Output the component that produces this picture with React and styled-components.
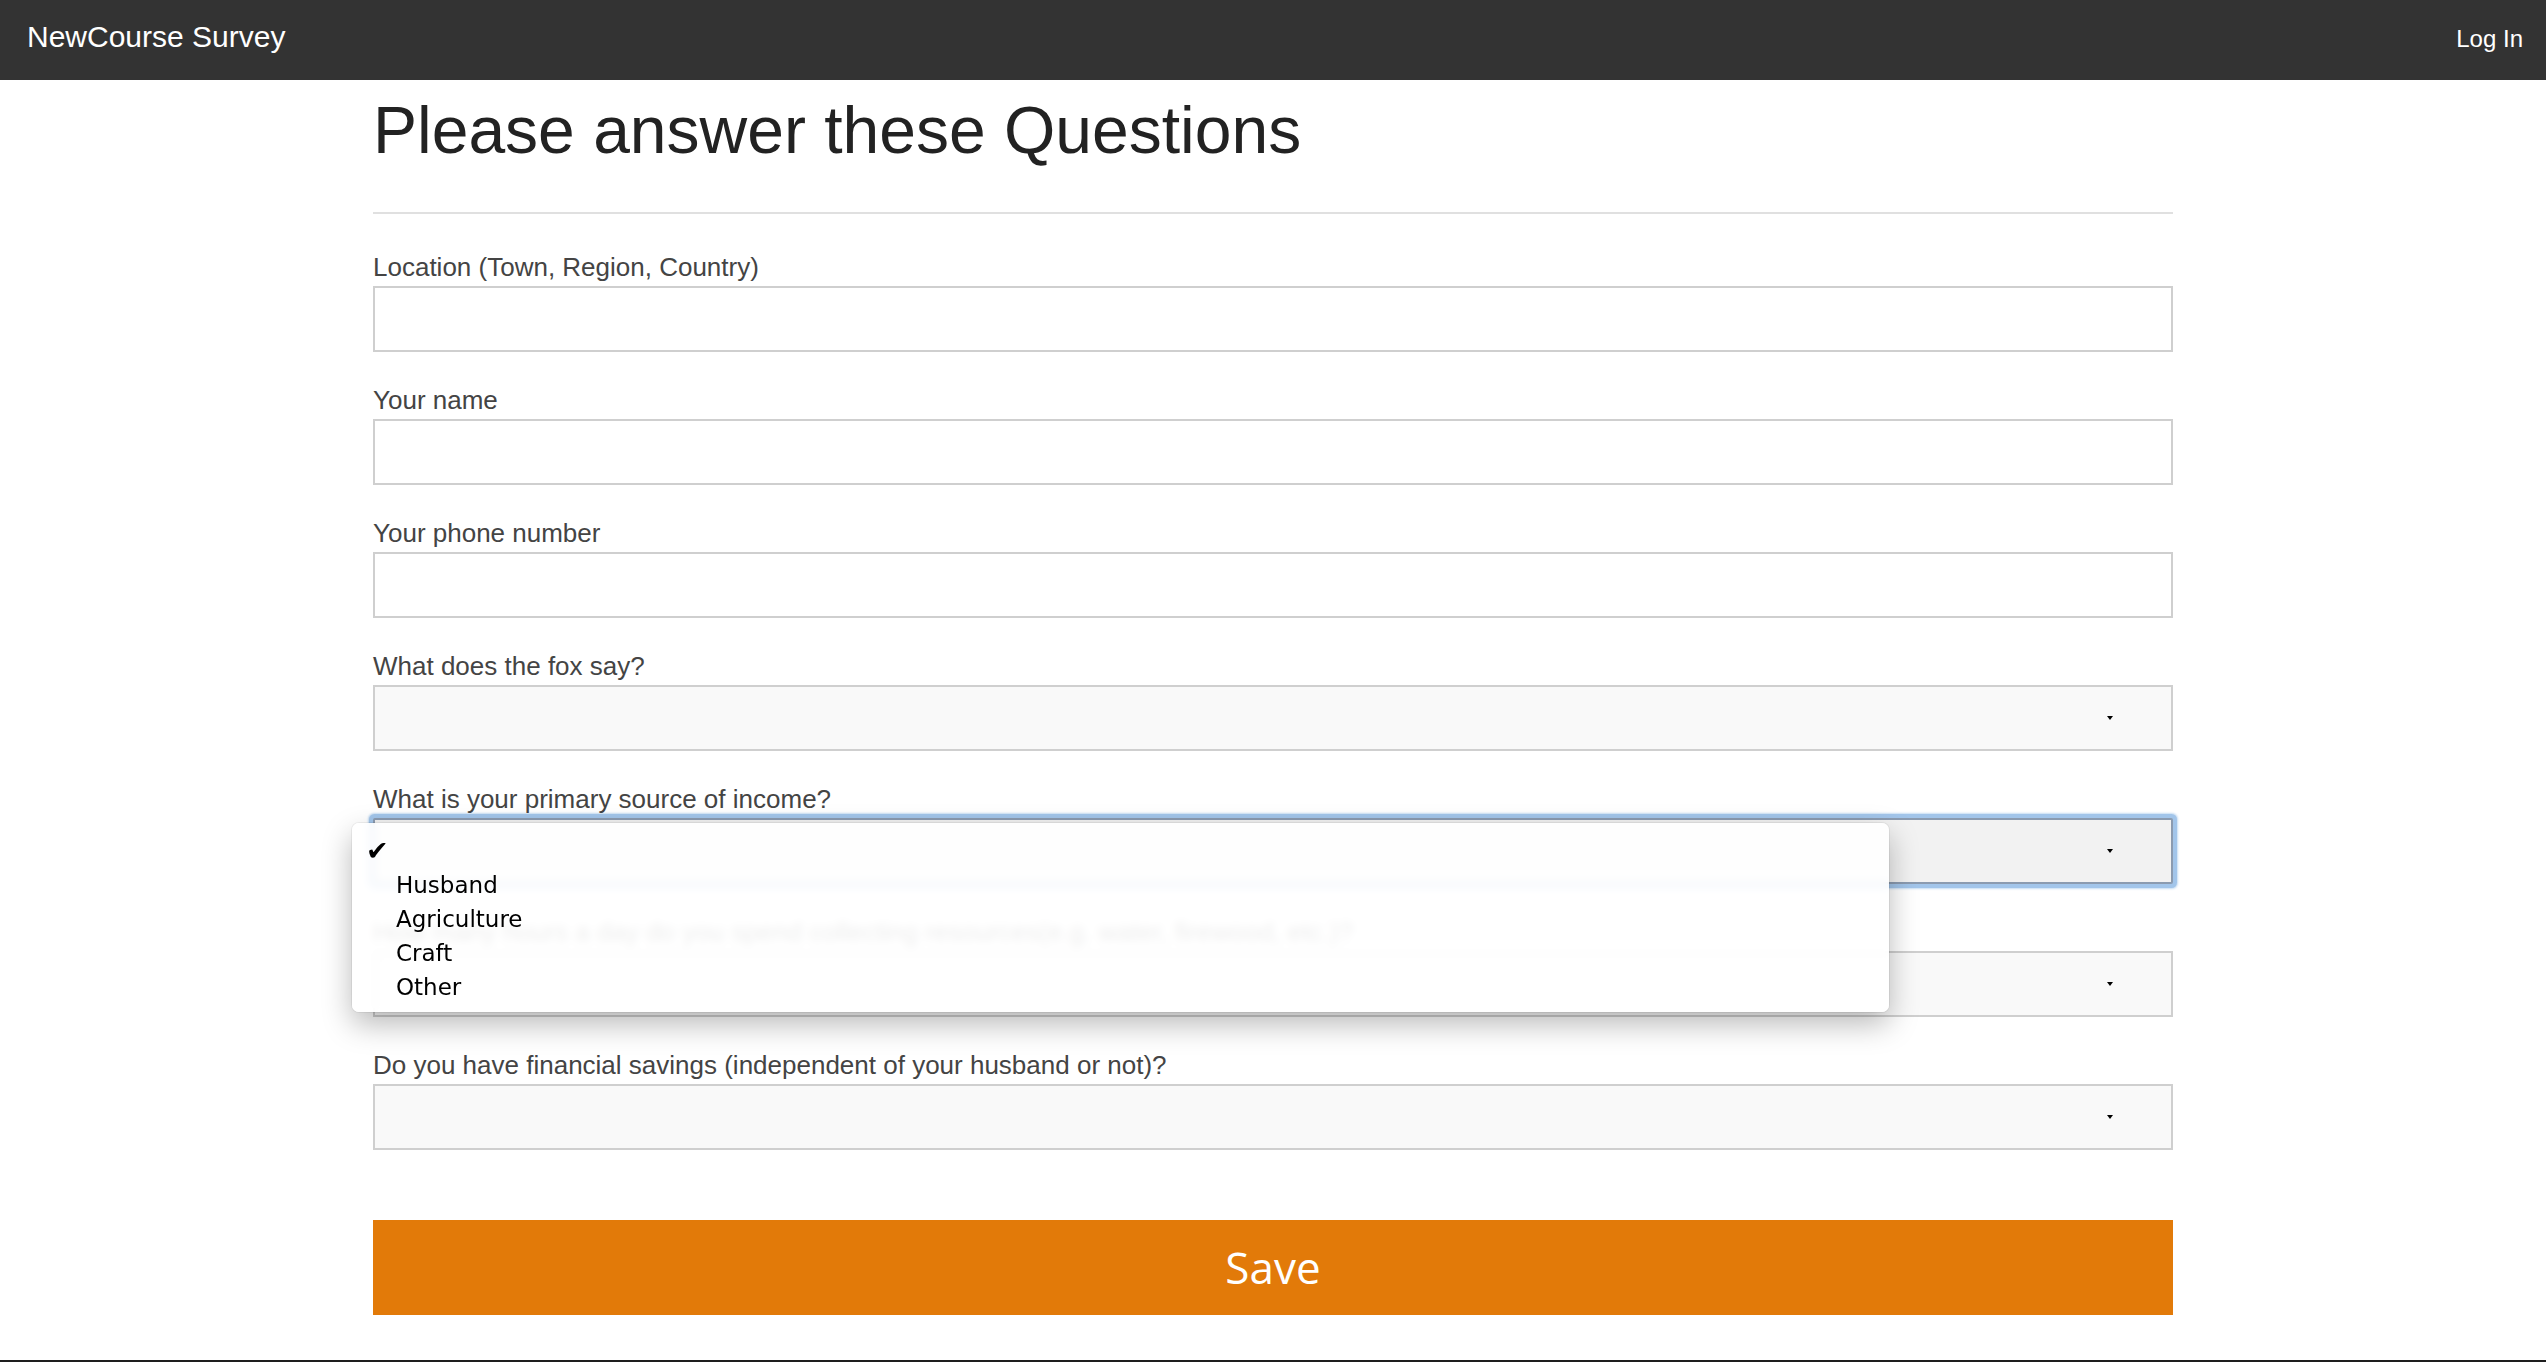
import React from 'react';
import styled, {createGlobalStyle} from 'styled-components';

const fields = [
    {label: 'Location (Town, Region, Country)', kind: 'text'},
    {label: 'Your name', kind: 'text'},
    {label: 'Your phone number', kind: 'text'},
    {label: 'What does the fox say?', kind: 'select'},
    {label: 'What is your primary source of income?', kind: 'select', open: true},
    {label: 'How many hours a day do you spend collecting resources(e.g. water, firewood, etc.)?', kind: 'select'},
    {label: 'Do you have financial savings (independent of your husband or not)?', kind: 'select'},
];

const incomeOptions = ['', 'Husband', 'Agriculture', 'Craft', 'Other'];

const App = () => {
    return (
        <Page>
            <GlobalStyle/>
            <NavBar>
                <Brand>NewCourse Survey</Brand>
                <NavLink>Log In</NavLink>
            </NavBar>
            <Main>
                <Title>Please answer these Questions</Title>
                <Divider/>
                <Form onSubmit={(e) => e.preventDefault()}>
                    {fields.map((f) => (
                        <Field key={f.label}>
                            <Label>{f.label}</Label>
                            {f.kind === 'text' ? (
                                <TextInput type="text"/>
                            ) : (
                                <SelectBox $focused={f.open}>
                                    <Caret/>
                                </SelectBox>
                            )}
                            {f.open && (
                                <Menu>
                                    {incomeOptions.map((o, i) => (
                                        <Option key={i}>
                                            <Check>{i === 0 ? '✔' : ''}</Check>
                                            {o}
                                        </Option>
                                    ))}
                                </Menu>
                            )}
                        </Field>
                    ))}
                    <SaveButton type="submit">Save</SaveButton>
                </Form>
            </Main>
            <BottomEdge/>
        </Page>
    )
}

const GlobalStyle = createGlobalStyle`
  * {
    box-sizing: border-box;
  }
  body {
    margin: 0;
    background: #fff;
    font-family: "Liberation Sans", Helvetica, Arial, sans-serif;
    overflow: hidden;
  }
`;

const Page = styled.div`
  display: flex;
  flex-direction: column;
  min-height: 100vh;
`;

const NavBar = styled.header`
  display: flex;
  justify-content: space-between;
  align-items: baseline;
  height: 80px;
  padding: 22px 23px 0 27px;
  background: #333;
`;

const Brand = styled.div`
  font-size: 30px;
  line-height: 1;
  color: #fff;
`;

const NavLink = styled.a`
  font-size: 24px;
  line-height: 1;
  color: #fff;
  cursor: pointer;
`;

const Main = styled.main`
  width: 1800px;
  margin: 0 auto;
`;

const Title = styled.h1`
  margin: 14px 0 0;
  font-size: 66px;
  font-weight: normal;
  line-height: 1.1;
  color: #222;
`;

const Divider = styled.hr`
  margin: 45px 0 38px;
  height: 2px;
  border: 0;
  background: #e0e0e0;
`;

const Form = styled.form`
  display: flex;
  flex-direction: column;
`;

const Field = styled.div`
  position: relative;
  margin-bottom: 33px;
`;

const Label = styled.label`
  display: block;
  margin-bottom: 4px;
  font-size: 26px;
  line-height: 30px;
  color: #444;
`;

const TextInput = styled.input`
  display: block;
  width: 100%;
  height: 66px;
  border: 2px solid #cfcfcf;
  background: #fff;
  outline: none;
`;

const SelectBox = styled.div`
  display: flex;
  justify-content: flex-end;
  align-items: center;
  height: 66px;
  padding-right: 58px;
  border: 2px solid ${p => p.$focused ? '#8b9bb0' : '#cfcfcf'};
  background: ${p => p.$focused ? '#f2f2f2' : '#f9f9f9'};
  border-radius: ${p => p.$focused ? '2px' : '0'};
  box-shadow: ${p => p.$focused ? '0 0 0 4px #a2c5ea, 0 0 2px 5px rgba(160,196,234,0.6)' : 'none'};
`;

const Caret = styled.span`
  width: 0;
  height: 0;
  border-left: 3px solid transparent;
  border-right: 3px solid transparent;
  border-top: 4px solid #000;
`;

const Menu = styled.ul`
  position: absolute;
  top: 39px;
  left: -21px;
  z-index: 10;
  width: 1537px;
  margin: 0;
  padding: 11px 0 8px;
  list-style: none;
  border-radius: 7px;
  background: rgba(255, 255, 255, 0.9);
  backdrop-filter: blur(4px);
  box-shadow: 0 12px 30px rgba(0, 0, 0, 0.28), 0 0 0 1px rgba(0, 0, 0, 0.06);
`;

const Option = styled.li`
  display: flex;
  height: 34px;
  padding-left: 14px;
  font-family: "DejaVu Sans", "Lucida Grande", sans-serif;
  font-size: 23px;
  line-height: 34px;
  color: #000;
`;

const Check = styled.span`
  width: 30px;
  font-size: 27px;
`;

const SaveButton = styled.button`
  height: 95px;
  margin-top: 37px;
  border: 0;
  background: #e27a09;
  color: #fff;
  font-family: "Open Sans", sans-serif;
  font-size: 44px;
  line-height: 1;
  cursor: pointer;
`;

const BottomEdge = styled.div`
  margin-top: auto;
  height: 2px;
  background: #1e1e1e;
`;

export default App;
